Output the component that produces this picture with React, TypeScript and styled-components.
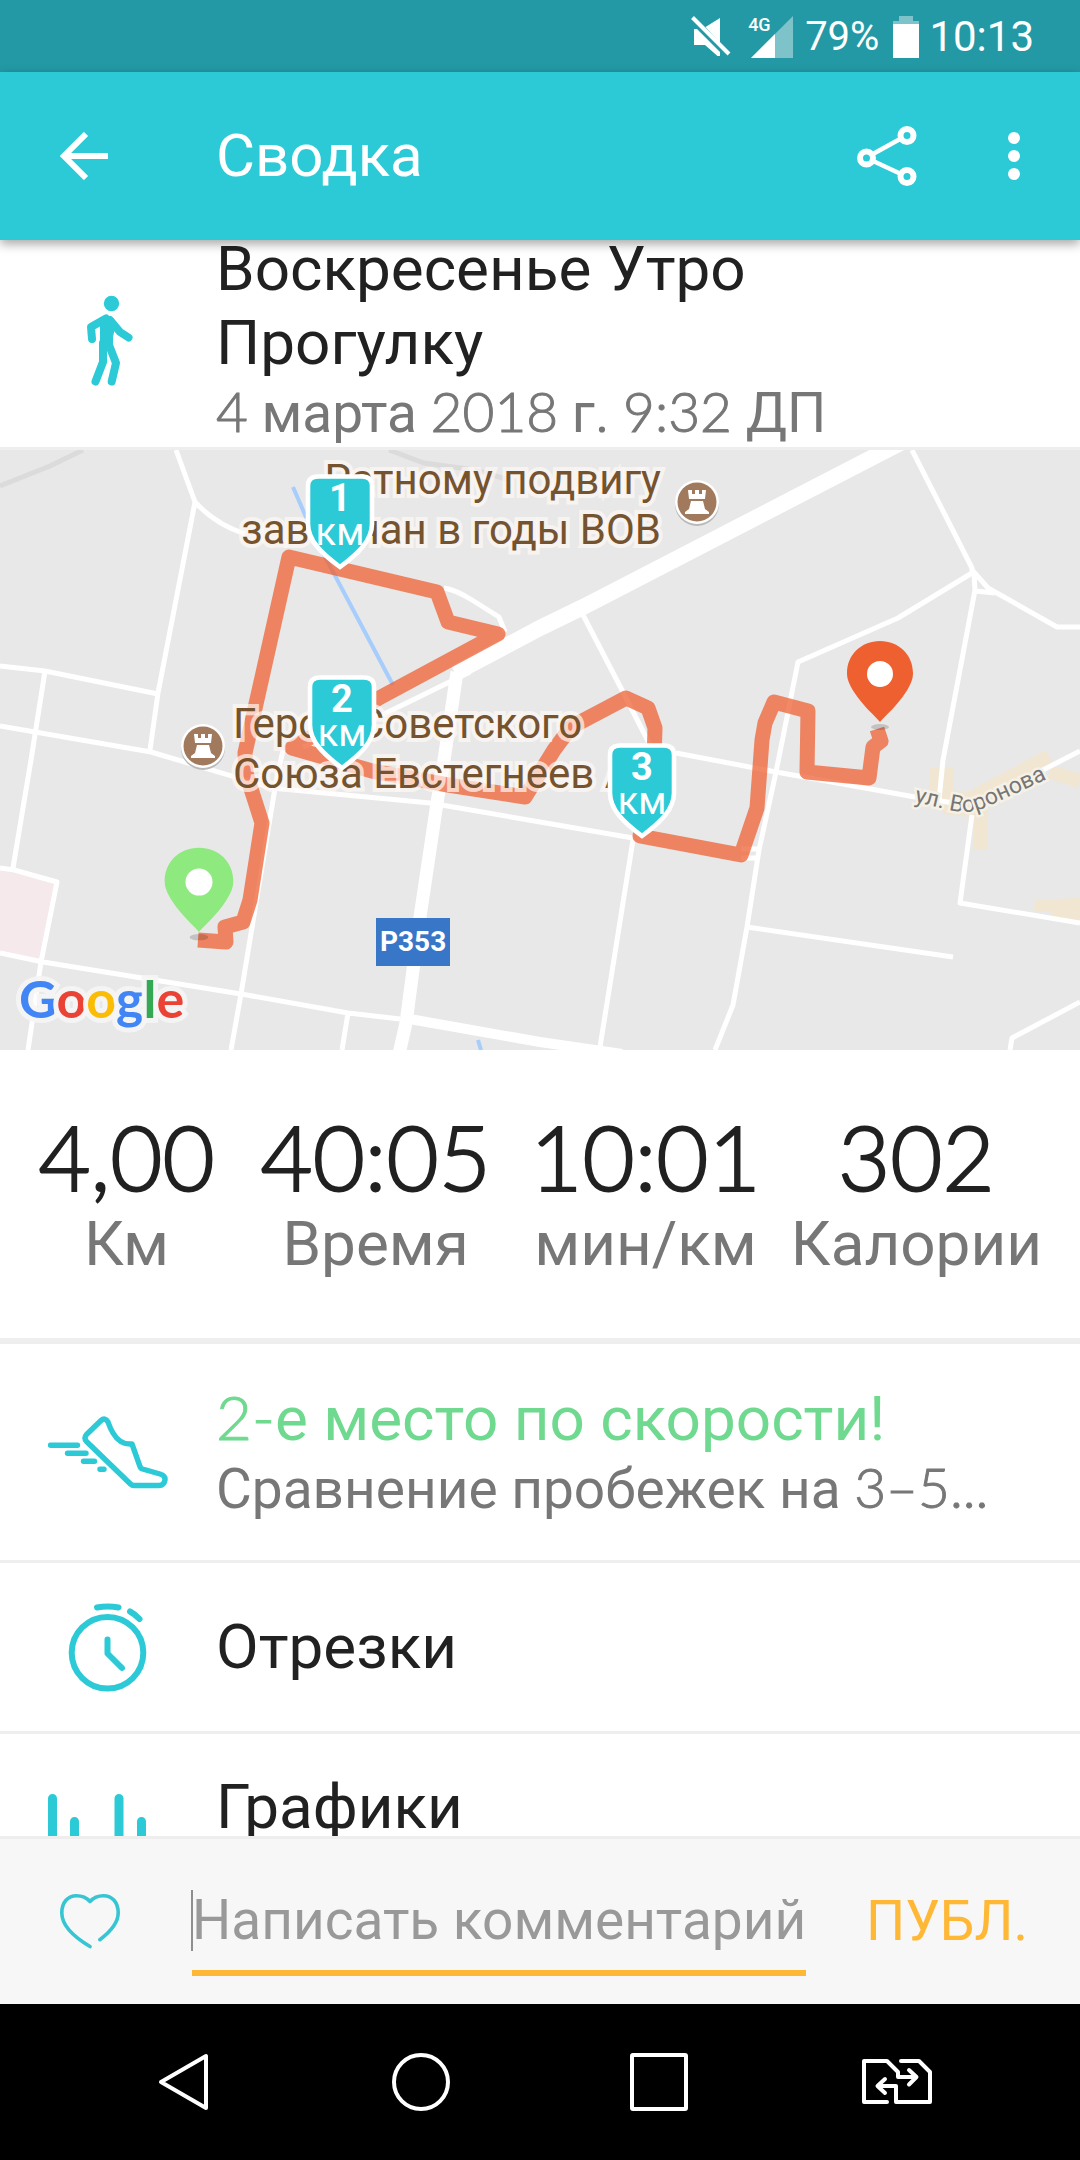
import React from "react";
import styled, { createGlobalStyle } from "styled-components";

const teal = "#2ccad6";
const amber = "#ffb736";
const ink = "#212121";
const muted = "#777777";
const rule = "#eeeeee";

const GlobalStyle = createGlobalStyle`
  * { box-sizing: border-box; }
  body {
    margin: 0;
    background: #ffffff;
    font-family: Roboto, "Open Sans", sans-serif;
  }
  button {
    border: 0;
    padding: 0;
    background: none;
    font: inherit;
    color: inherit;
    display: flex;
    align-items: center;
    justify-content: center;
  }
  svg { display: block; }
`;

const Screen = styled.div`
  display: flex;
  flex-direction: column;
  height: 100vh;
  overflow: hidden;
`;

/* ---------- bars ---------- */

const StatusBar = styled.div`
  display: flex;
  align-items: center;
  justify-content: flex-end;
  height: 72px;
  padding: 2px 46px 0 0;
  background: #2399a5;
  color: #ffffff;
  font-size: 40px;
  line-height: 48px;
  flex: none;
`;

const Signal = styled.span`
  position: relative;
  margin: 0 12px 0 20px;
`;

const Network = styled.span`
  position: absolute;
  left: -3px;
  top: 0;
  font-size: 18px;
  line-height: 18px;
  font-weight: 500;
`;

const Battery = styled.span`
  margin: 0 10px 0 14px;
`;

const Clock = styled.time`
  font-size: 42px;
`;

const AppBar = styled.header`
  position: relative;
  z-index: 2;
  display: flex;
  align-items: center;
  height: 168px;
  padding-left: 48px;
  background: ${teal};
  color: #ffffff;
  box-shadow: 0 4px 10px rgba(0, 0, 0, 0.35);
  flex: none;
`;

const BarButton = styled.button<{ $width: number }>`
  width: ${(p) => p.$width}px;
  height: 72px;
`;

const BarTitle = styled.h1`
  flex: 1;
  margin: 0 0 0 96px;
  font-size: 60px;
  line-height: 72px;
  font-weight: 400;
`;

/* ---------- scrolling content ---------- */

const Viewport = styled.main`
  flex: 1;
  min-height: 0;
  overflow: hidden;
`;

const Feed = styled.div`
  margin-top: -9px;
`;

const Row = styled.section<{ $top?: boolean; $pad: number }>`
  display: grid;
  grid-template-columns: 120px minmax(0, 1fr);
  column-gap: 48px;
  align-items: ${(p) => (p.$top ? "start" : "center")};
  padding: ${(p) => p.$pad}px 48px;
  border-bottom: 3px solid ${rule};
`;

const RowTitle = styled.h2<{ $color?: string }>`
  margin: 0;
  font-size: 62px;
  line-height: 74px;
  font-weight: 400;
  color: ${(p) => p.$color ?? ink};
`;

const RowNote = styled.p`
  margin: 0;
  font-size: 55px;
  line-height: 66px;
  color: ${muted};
  white-space: nowrap;
`;

const Digits = styled.span`
  font-family: Lato, Roboto, sans-serif;
  font-weight: 300;
  line-height: 0;
  -webkit-text-stroke: 1px currentColor;
`;

const ChartBox = styled.div`
  padding-top: 12px;
`;

const Stats = styled.dl`
  display: grid;
  grid-template-columns: 6fr 6fr 7fr 6fr;
  margin: 0;
  padding: 54px 38px 58px 2px;
  border-bottom: 6px solid ${rule};
`;

const Stat = styled.div`
  display: flex;
  flex-direction: column-reverse;
  align-items: center;
`;

const StatValue = styled.dd`
  margin: 0;
  font-family: Lato, Roboto, sans-serif;
  font-weight: 300;
  font-size: 90px;
  line-height: 104px;
  color: ${ink};
  -webkit-text-stroke: 2px currentColor;
`;

const StatLabel = styled.dt`
  font-size: 62px;
  line-height: 72px;
  color: ${muted};
`;

/* ---------- map ---------- */

const MapFrame = styled.div`
  position: relative;
  aspect-ratio: 9 / 5;
  overflow: hidden;
  background: #e8e8e8;
`;

const MapArt = styled.svg`
  width: 100%;
  height: 100%;
`;

const PinLayer = styled.svg`
  position: absolute;
  inset: 0;
  width: 100%;
  height: 100%;
`;

const Spot = styled.div<{ $x: number; $y: number }>`
  position: absolute;
  left: ${(p) => (p.$x / 1080) * 100}%;
  top: ${(p) => (p.$y / 600) * 100}%;
`;

const Place = styled(Spot)<{ $right?: boolean }>`
  transform: ${(p) => (p.$right ? "translateX(-100%)" : "none")};
  text-align: ${(p) => (p.$right ? "right" : "left")};
  font-size: 42px;
  line-height: 50px;
  color: #75532f;
  white-space: nowrap;
  -webkit-text-stroke: 8px rgba(255, 248, 244, 0.7);
  paint-order: stroke fill;
`;

const KmPin = styled(Spot)`
  width: 70px;
  height: 96px;
  color: #ffffff;
  text-align: center;
`;

const KmShape = styled.svg`
  position: absolute;
  left: 0;
  top: 0;
`;

const KmNumber = styled.div`
  position: relative;
  margin-top: 4px;
  font-size: 38px;
  line-height: 40px;
  font-weight: 700;
`;

const KmUnit = styled.div`
  position: relative;
  font-size: 38px;
  line-height: 28px;
`;

const RoadSign = styled(Spot)`
  padding: 0 4px;
  background: #3876c8;
  color: #ffffff;
  font-size: 28px;
  line-height: 48px;
  font-weight: 700;
`;

const Logo = styled(Spot)`
  font-family: Lato, sans-serif;
  font-size: 52px;
  line-height: 64px;
  font-weight: 700;
  -webkit-text-stroke: 10px rgba(245, 245, 245, 0.9);
  paint-order: stroke fill;
`;

const Tint = styled.span<{ $c: string }>`
  color: ${(p) => p.$c};
`;

/* ---------- comment bar and navigation ---------- */

const CommentBar = styled.form`
  display: flex;
  align-items: flex-start;
  height: 168px;
  padding: 36px 52px 0 48px;
  background: #f7f7f7;
  border-top: 3px solid ${rule};
  flex: none;
`;

const LikeButton = styled.button`
  width: 84px;
  height: 92px;
`;

const Field = styled.label`
  position: relative;
  flex: 1;
  min-width: 0;
  margin: 0 60px;
  border-bottom: 6px solid ${amber};
`;

const Caret = styled.span`
  position: absolute;
  left: -1px;
  top: 15px;
  width: 2px;
  height: 61px;
  background: #8f8f8f;
`;

const CommentInput = styled.input`
  display: block;
  width: 100%;
  height: 95px;
  padding: 0 0 6px;
  border: 0;
  outline: 0;
  background: none;
  font: 400 55px/66px Roboto, sans-serif;
  color: ${ink};
  &::placeholder { color: #999999; opacity: 1; }
`;

const PostButton = styled.button`
  height: 92px;
  font-size: 55px;
  line-height: 66px;
  color: ${amber};
`;

const NavBar = styled.nav`
  display: grid;
  grid-template-columns: repeat(4, 1fr);
  align-items: center;
  height: 156px;
  padding: 0 64px;
  background: #000000;
  flex: none;
`;

/* ---------- icons ---------- */

const line = { fill: "none", strokeLinecap: "round", strokeLinejoin: "round" } as const;

const MuteIcon = () => (
  <svg width="40" height="42" viewBox="0 0 40 42" fill="#fff" aria-hidden="true">
    <path d="M14.5 11 29 2v25zM3 13h3l23 23v4h-2.500L14 29H3z" />
    <path d="M1.500 1.500 38 38" stroke="#fff" strokeWidth="4" />
  </svg>
);

const SignalIcon = () => (
  <svg width="42" height="42" viewBox="0 0 42 42" aria-hidden="true">
    <path d="M42 0v42H0z" fill="#7fc3ca" />
    <path d="M24 18v24H0z" fill="#fff" />
  </svg>
);

const BatteryIcon = () => (
  <svg width="26" height="42" viewBox="0 0 26 42" aria-hidden="true">
    <path d="M6 0h14v5h6v5H0V5h6z" fill="#7fc3ca" />
    <path d="M0 8h26v34H0z" fill="#fff" />
  </svg>
);

const BackIcon = () => (
  <svg width="48" height="48" viewBox="0 0 48 48" fill="none" stroke="#fff" strokeWidth="6" aria-hidden="true">
    <path d="M26 2 4 24l22 22M4 24h44" />
  </svg>
);

const ShareIcon = () => (
  <svg width="60" height="60" viewBox="0 0 60 60" fill="none" stroke="#fff" strokeWidth="6" aria-hidden="true">
    <circle cx="9.500" cy="32" r="6.500" />
    <circle cx="50" cy="9.500" r="6.500" />
    <circle cx="50" cy="50.500" r="6.500" />
    <path d="M15 28.500 44 12.500M15 34.500 44 48" strokeWidth="4.500" />
  </svg>
);

const MoreIcon = () => (
  <svg width="12" height="48" viewBox="0 0 12 48" fill="#fff" aria-hidden="true">
    <circle cx="6" cy="6" r="6" />
    <circle cx="6" cy="24" r="6" />
    <circle cx="6" cy="42" r="6" />
  </svg>
);

const WalkIcon = () => (
  <svg width="120" height="120" viewBox="0 0 120 120" stroke={teal} strokeWidth="8" {...line} aria-hidden="true">
    <circle cx="63.500" cy="24.500" r="7.700" fill={teal} stroke="none" />
    <path d="M58 39.500 43 48l1 12M62 41l10 12 8.500 5.500" />
    <path d="M55 64v19l-7.500 19.500M61 66l7 18-4.300 18.500" />
    <path d="M54 41h8l2.500 5-2.500 12v10l-7 1V44z" fill={teal} strokeWidth="6" />
  </svg>
);

const ShoeIcon = () => (
  <svg width="120" height="120" viewBox="0 0 120 120" stroke={teal} strokeWidth="5.400" {...line} aria-hidden="true">
    <path d="M53 28.500 38.500 42.500Q35.500 46 38.500 49.500L82.500 92Q84 93.500 86 93.500H111Q116 93.500 117 88 117.500 83.500 112 82L94.500 77Q92.500 76.500 91.800 74L84 52Q72 53 65 41 62 36 60 30 57 25 53 28.500Z" />
    <path d="M2.500 53.300h27M19.500 61.300h18.500M35.500 69.300h11M52 77.300h4" />
  </svg>
);

const StopwatchIcon = () => (
  <svg width="120" height="120" viewBox="0 0 120 120" stroke={teal} strokeWidth="6" {...line} aria-hidden="true">
    <circle cx="59.500" cy="65.700" r="35.800" />
    <path d="M59.500 52.500v14L74 81M49 20.500q11-2 21.500 0M82 24.500q5.500 3 9.500 7.500" />
  </svg>
);

const ChartIcon = () => (
  <svg width="120" height="120" viewBox="0 0 120 120" stroke={teal} strokeWidth="9" {...line} aria-hidden="true">
    <path d="M4.500 16.500V104M26.500 39.500V104M49 62V104M71 16.500V104M93.500 39.500V104M115.500 62V104" />
  </svg>
);

const HeartIcon = () => (
  <svg width="60" height="56" viewBox="0 0 60 56" stroke="#36c5d3" strokeWidth="3.600" {...line} aria-hidden="true">
    <path d="M30 53.500C14 44 1.800 33 1.800 20 1.800 9 8 2.700 16.500 2.700 22 2.700 26.500 4.500 30 8.500 33.500 4.500 38 2.700 43.500 2.700 52 2.700 58.200 9 58.200 20 58.200 30 50 39 39.800 46.700" />
  </svg>
);

const NavBack = () => (
  <svg width="52" height="58" viewBox="0 0 52 58" fill="none" stroke="#fff" strokeWidth="4" aria-hidden="true">
    <path d="M4 29 49 3v52z" strokeLinejoin="round" />
  </svg>
);

const NavHome = () => (
  <svg width="58" height="58" viewBox="0 0 58 58" fill="none" stroke="#fff" strokeWidth="4" aria-hidden="true">
    <circle cx="29" cy="29" r="27" />
  </svg>
);

const NavRecent = () => (
  <svg width="58" height="58" viewBox="0 0 58 58" fill="none" stroke="#fff" strokeWidth="4" aria-hidden="true">
    <rect x="2" y="2" width="54" height="54" rx="1" />
  </svg>
);

const NavSim = () => (
  <svg width="70" height="46" viewBox="0 0 70 46" stroke="#fff" strokeWidth="4" {...line} aria-hidden="true">
    <path d="M25 43H2V2h23l11 11v5h18M47 11l7.500 7-7.500 7.500" />
    <path d="M39 2h18l11 11v30H34V27H16M23 20l-7.500 7 7.500 7" />
  </svg>
);

const Tower = ({ x, y }: { x: number; y: number }) => (
  <g transform={`translate(${x} ${y})`}>
    <circle cy="2" r="22" fill="#b9b9b9" />
    <circle r="22" fill="#fff" />
    <circle r="19.500" fill="#a1795c" />
    <path
      fill="#fff"
      d="M-9-12h4v4h3v-4h4v4h3v-4h4l-1 9H-8zM-6-1H6L8 7l4 3v2h-24v-2l4-3z"
    />
  </g>
);

const Pin = ({ x, y, s, color }: { x: number; y: number; s: number; color: string }) => (
  <g transform={`translate(${x} ${y}) scale(${s})`}>
    <ellipse cy="5" rx="9" ry="3" fill="#000" opacity="0.16" />
    <path fill={color} d="M0 0C-6-7-17-16-26-30-31-38-33-43-33-49-33-67-19-81 0-81S33-67 33-49C33-43 31-38 26-30 17-16 6-7 0 0Z" />
    <circle cy="-48" r="13" fill="#fff" />
  </g>
);

const KmMarker = ({ x, y, n }: { x: number; y: number; n: number }) => (
  <KmPin $x={x} $y={y}>
    <KmShape width="70" height="96" viewBox="0 0 70 96" aria-hidden="true">
      <path
        d="M13 2.500H57Q67 2.500 67 12V50C67 66 54 79 35 93 16 79 3 66 3 50V12Q3 2.500 13 2.500Z"
        fill={teal}
        stroke="#fff"
        strokeWidth="4.600"
      />
    </KmShape>
    <KmNumber>{n}</KmNumber>
    <KmUnit>км</KmUnit>
  </KmPin>
);

const RouteMap = () => (
  <MapFrame>
    <MapArt viewBox="0 0 1080 600" preserveAspectRatio="xMidYMid slice" role="img" aria-label="Карта маршрута">
      <path d="M0 420 57 433 41 511 0 502Z" fill="#f5e9ec" />
      <g fill="none" stroke="#f0e6d2">
        <path d="M941 318V350M944 352 981 356" strokeWidth="24" />
        <path d="M972 350 1050 308" strokeWidth="18" />
        <path d="M981 360V400M1050 322 1080 331" strokeWidth="14" />
      </g>
      <path d="M1035 450 1080 448V473L1052 467V461H1034Z" fill="#f0e6d2" />
      <path d="M0 36 50 16 83 0M389 0 424 13 475 20 510 30" fill="none" stroke="#dbdbdb" strokeWidth="5" />
      <g fill="none" stroke="#fff" strokeWidth="5" strokeLinejoin="round">
        <path d="M176 0 195 52 Q215 74 245 84M195 52 158 243 150 300" />
        <path d="M0 216 45 221 158 244M45 221 31 310 13 418" />
        <path d="M0 276 151 302 272 338 430 353 540 372 633 388" />
        <path d="M444 138Q456 140 472 150L499 167 505 182" />
        <path d="M0 503 43 512 241 544 348 563 400 569M348 563 342 600" />
        <path d="M0 418 14 420 57 432 41 512 28 600" />
        <path d="M283 300 275 338 241 544 231 600" />
        <path d="M676 303 776 322 915 347 960 354" />
        <path d="M912 0 972 118V123L898 168 798 212 776 322 759 400 747 477 733 555 715 600" />
        <path d="M972 120 988 138 1057 177H1080M974 124 975 140 943 310 939 350M975 141 995 143" />
        <path d="M583 165 623 242 650 295" />
        <path d="M741 399H760M741 408H758M747 477 953 507M633 390 600 597" />
        <path d="M972 365 960 453 1080 473M1080 552 1012 588 1010 600M1080 301 1039 322" />
        <path d="M470 222 382 265 303 297" />
      </g>
      <path d="M910 -12 583 157 540 178 455 223" fill="none" stroke="#fff" strokeWidth="16" />
      <path d="M457 222 444 310 437 353 420 467 406 573 399 604" fill="none" stroke="#fff" strokeWidth="13" />
      <path d="M404 568 540 592 622 604" fill="none" stroke="#fff" strokeWidth="10" />
      <path d="M293 37 315 88 393 235M478 590 481 600" fill="none" stroke="#a6cdfb" strokeWidth="4" />
      <path
        d="M198 490 226 492 225 477 243 472 250 450 262 373 246 323 245 303 289 107 437 142 448 172 498 184 379 248 292 298 372 321 448 335 525 347 554 300 571 277 626 248 648 258 655 278 654 310 640 386 741 405 757 358 762 290 765 273 774 252 808 261 807 322 869 328 873 297 881 291 877 279"
        fill="none"
        stroke="#ee6334"
        strokeOpacity="0.76"
        strokeWidth="15"
        strokeLinejoin="round"
      />
      <Tower x={697} y={52} />
      <Tower x={203} y={296} />
      <path id="street" d="M914 352 950 360Q966 365 984 358L1060 323" fill="none" />
      <text
        fontFamily="Roboto, sans-serif"
        fontSize="23"
        fill="#757575"
        stroke="#f6f1e6"
        strokeWidth="5"
        paintOrder="stroke"
      >
        <textPath href="#street">ул. Воронова</textPath>
      </text>
    </MapArt>
    <Place $x={661} $y={5} $right>
      Ратному подвигу
      <br />
      заводчан в годы ВОВ
    </Place>
    <Place $x={233} $y={249}>
      Герой Советского
      <br />
      Союза Евстегнеев А
    </Place>
    <RoadSign $x={376} $y={468}>P353</RoadSign>
    <Logo $x={19} $y={516}>
      <Tint $c="#4285f4">G</Tint>
      <Tint $c="#ea4335">o</Tint>
      <Tint $c="#fbbc05">o</Tint>
      <Tint $c="#4285f4">g</Tint>
      <Tint $c="#34a853">l</Tint>
      <Tint $c="#ea4335">e</Tint>
    </Logo>
    <KmMarker x={305} y={24} n={1} />
    <KmMarker x={307} y={225} n={2} />
    <KmMarker x={607} y={293} n={3} />
    <PinLayer viewBox="0 0 1080 600" preserveAspectRatio="xMidYMid slice" aria-hidden="true">
      <Pin x={880} y={272} s={1} color="#ee6030" />
      <Pin x={199} y={482} s={1.040} color="#8ee97f" />
    </PinLayer>
  </MapFrame>
);

const stats = [
  { value: "4,00", label: "Км" },
  { value: "40:05", label: "Время" },
  { value: "10:01", label: "мин/км" },
  { value: "302", label: "Калории" },
];

export default function App() {
  return (
    <Screen>
      <GlobalStyle />
      <StatusBar>
        <MuteIcon />
        <Signal>
          <SignalIcon />
          <Network>4G</Network>
        </Signal>
        79%
        <Battery>
          <BatteryIcon />
        </Battery>
        <Clock>10:13</Clock>
      </StatusBar>

      <AppBar>
        <BarButton $width={72} aria-label="Назад">
          <BackIcon />
        </BarButton>
        <BarTitle>Сводка</BarTitle>
        <BarButton $width={122} aria-label="Поделиться">
          <ShareIcon />
        </BarButton>
        <BarButton $width={132} aria-label="Ещё">
          <MoreIcon />
        </BarButton>
      </AppBar>

      <Viewport>
        <Feed>
          <Row $pad={1}>
            <WalkIcon />
            <div>
              <RowTitle>
                Воскресенье Утро
                <br />
                Прогулку
              </RowTitle>
              <RowNote>
                <Digits>4</Digits> марта <Digits>2018</Digits> г. <Digits>9:32</Digits> ДП
              </RowNote>
            </div>
          </Row>

          <RouteMap />

          <Stats>
            {stats.map((s) => (
              <Stat key={s.label}>
                <StatLabel>{s.label}</StatLabel>
                <StatValue>{s.value}</StatValue>
              </Stat>
            ))}
          </Stats>

          <Row $pad={38}>
            <ShoeIcon />
            <div>
              <RowTitle $color="#6fd98f">
                <Digits>2-</Digits>е место по скорости!
              </RowTitle>
              <RowNote>
                Сравнение пробежек на <Digits>3–5...</Digits>
              </RowNote>
            </div>
          </Row>
          <Row $pad={24}>
            <StopwatchIcon />
            <RowTitle>Отрезки</RowTitle>
          </Row>
          <Row $pad={36} $top>
            <ChartBox>
              <ChartIcon />
            </ChartBox>
            <RowTitle>Графики</RowTitle>
          </Row>
        </Feed>
      </Viewport>

      <CommentBar onSubmit={(e) => e.preventDefault()}>
        <LikeButton type="button" aria-label="Нравится">
          <HeartIcon />
        </LikeButton>
        <Field>
          <Caret />
          <CommentInput type="text" placeholder="Написать комментарий" aria-label="Написать комментарий" />
        </Field>
        <PostButton type="submit">ПУБЛ.</PostButton>
      </CommentBar>

      <NavBar>
        <button aria-label="Назад">
          <NavBack />
        </button>
        <button aria-label="Домой">
          <NavHome />
        </button>
        <button aria-label="Недавние">
          <NavRecent />
        </button>
        <button aria-label="Сменить SIM">
          <NavSim />
        </button>
      </NavBar>
    </Screen>
  );
}
